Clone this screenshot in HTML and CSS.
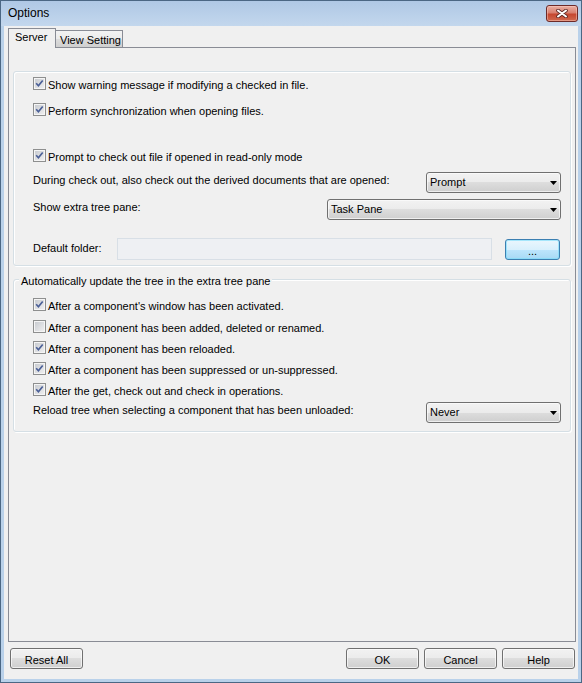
FILE: index.html
```html
<!DOCTYPE html>
<html>
<head>
<meta charset="utf-8">
<link rel="stylesheet" href="styles.css">
</head>
<body>
<div class="window">
  <div class="titlebar">
    <span class="title">Options</span>
    <button class="close" type="button" aria-label="Close">
      <svg width="12" height="9" viewBox="0 0 12 9"><path d="M2 1.5 L10 7.5 M10 1.5 L2 7.5" stroke="#5b2622" stroke-width="3.6" stroke-linecap="round" fill="none"/><path d="M2 1.5 L10 7.5 M10 1.5 L2 7.5" stroke="#ffffff" stroke-width="2" stroke-linecap="round" fill="none"/></svg>
    </button>
  </div>
  <div class="frame">
    <div class="client">
      <div class="tabs">
        <div class="tabstrip">
          <div class="tab active">Server</div>
          <div class="tab inactive">View Setting</div>
        </div>
        <div class="page">
          <div class="group g1">
            <div class="chk"><span class="cb on"><svg viewBox="0 0 9 9"><path d="M1.2 4.3 L3.4 6.7 L7.7 1.5"/></svg></span><span class="lbl">Show warning message if modifying a checked in file.</span></div>
            <div class="chk m13"><span class="cb on"><svg viewBox="0 0 9 9"><path d="M1.2 4.3 L3.4 6.7 L7.7 1.5"/></svg></span><span class="lbl">Perform synchronization when opening files.</span></div>
            <div class="chk m33"><span class="cb on"><svg viewBox="0 0 9 9"><path d="M1.2 4.3 L3.4 6.7 L7.7 1.5"/></svg></span><span class="lbl">Prompt to check out file if opened in read-only mode</span></div>
            <div class="row m10"><span class="lbl">During check out, also check out the derived documents that are opened:</span>
              <div class="combo w135"><span>Prompt</span><svg class="arrow" width="7" height="4" viewBox="0 0 7 4"><polygon points="0,0 7,0 3.5,4"/></svg></div>
            </div>
            <div class="row m6"><span class="lbl">Show extra tree pane:</span>
              <div class="combo w234"><span>Task Pane</span><svg class="arrow" width="7" height="4" viewBox="0 0 7 4"><polygon points="0,0 7,0 3.5,4"/></svg></div>
            </div>
            <div class="row rowf m18"><span class="lbl lbl4">Default folder:</span>
              <div class="textbox"></div>
              <button class="btn dots" type="button">...</button>
            </div>
          </div>
          <div class="group g2">
            <div class="legend">Automatically update the tree in the extra tree pane</div>
            <div class="chk m10"><span class="cb on"><svg viewBox="0 0 9 9"><path d="M1.2 4.3 L3.4 6.7 L7.7 1.5"/></svg></span><span class="lbl">After a component's window has been activated.</span></div>
            <div class="chk m9"><span class="cb"></span><span class="lbl">After a component has been added, deleted or renamed.</span></div>
            <div class="chk m8"><span class="cb on"><svg viewBox="0 0 9 9"><path d="M1.2 4.3 L3.4 6.7 L7.7 1.5"/></svg></span><span class="lbl">After a component has been reloaded.</span></div>
            <div class="chk m8"><span class="cb on"><svg viewBox="0 0 9 9"><path d="M1.2 4.3 L3.4 6.7 L7.7 1.5"/></svg></span><span class="lbl">After a component has been suppressed or un-suppressed.</span></div>
            <div class="chk m8"><span class="cb on"><svg viewBox="0 0 9 9"><path d="M1.2 4.3 L3.4 6.7 L7.7 1.5"/></svg></span><span class="lbl">After the get, check out and check in operations.</span></div>
            <div class="row m6"><span class="lbl">Reload tree when selecting a component that has been unloaded:</span>
              <div class="combo w135"><span>Never</span><svg class="arrow" width="7" height="4" viewBox="0 0 7 4"><polygon points="0,0 7,0 3.5,4"/></svg></div>
            </div>
          </div>
        </div>
      </div>
      <div class="footer">
        <button class="btn" type="button">Reset All</button>
        <button class="btn push" type="button">OK</button>
        <button class="btn" type="button">Cancel</button>
        <button class="btn" type="button">Help</button>
      </div>
    </div>
  </div>
</div>
</body>
</html>
```
FILE: styles.css
```css
* { box-sizing: border-box; }
html, body { margin: 0; padding: 0; }
body {
  width: 582px;
  height: 683px;
  overflow: hidden;
  font: 11px/13px "Liberation Sans", Arial, sans-serif;
  color: #000;
  background: #fff;
}
.window {
  width: 582px;
  height: 683px;
  display: flex;
  flex-direction: column;
  border: 1px solid #4b6784;
  background: #b9d1ea;
}
.titlebar {
  height: 25px;
  flex: none;
  display: flex;
  align-items: flex-start;
  padding: 0 3px 0 7px;
  background: linear-gradient(#afc8e5, #c3d7ed);
}
.title {
  font-size: 12px;
  line-height: 15px;
  margin-top: 5px;
}
.close {
  margin-left: auto;
  margin-top: 4px;
  width: 32px;
  height: 17px;
  padding: 0;
  border: 1px solid #6d2a28;
  border-radius: 3px;
  background: linear-gradient(#eab0a3, #d9806f 45%, #c6472f 55%, #d06a4f);
  box-shadow: inset 0 0 0 1px rgba(255, 210, 200, 0.45);
  display: flex;
  align-items: center;
  justify-content: center;
}
.frame {
  flex: 1;
  display: flex;
  padding: 0 3px 3px;
}
.client {
  flex: 1;
  display: flex;
  flex-direction: column;
  background: #f0f0f0;
  padding: 2px 0 0 4px;
}
.tabs {
  width: 568px;
  display: flex;
  flex-direction: column;
}
.tabstrip {
  height: 19px;
  display: flex;
  align-items: flex-start;
}
.tab {
  border: 1px solid #898c95;
  border-bottom: none;
  white-space: nowrap;
}
.tab.active {
  width: 48px;
  height: 20px;
  padding: 2px 0 0 6px;
  background: #f0f0f0;
  position: relative;
  z-index: 1;
}
.tab.inactive {
  width: 67px;
  height: 17px;
  margin-top: 2px;
  border-left: none;
  padding: 3px 0 0 4px;
  background: linear-gradient(#f3f3f3, #ebebeb 50%, #dddddd 50%, #cfcfcf);
}
.page {
  height: 595px;
  border: 1px solid #898c95;
  padding: 23px 4px 0;
  background: #f0f0f0;
}
.group {
  border: 1px solid #d5dfe5;
  border-radius: 3px;
  box-shadow: inset 1px 1px 0 #fff, 1px 1px 0 #fff;
  display: flex;
  flex-direction: column;
  padding: 0 9px 0 19px;
}
.g1 { height: 195px; padding-top: 5px; }
.g2 { height: 153px; margin-top: 13px; }
.legend {
  align-self: flex-start;
  margin: -5px 0 0 -14px;
  padding: 0 1px 0 2px;
  background: #f0f0f0;
  line-height: 13px;
}
.chk {
  display: flex;
  align-items: flex-start;
  height: 13px;
  white-space: nowrap;
}
.chk .lbl { margin: 2px 0 0 2px; }
.cb {
  width: 13px;
  height: 13px;
  flex: none;
  border: 1px solid #8e8f8f;
  padding: 1px;
  background: linear-gradient(135deg, #c9ccd1, #eeeeef) content-box, #f5f5f5;
  display: flex;
}
.cb svg { width: 9px; height: 9px; }
.cb path { fill: none; stroke: #4a5f97; stroke-width: 1.7; }
.row {
  display: flex;
  align-items: flex-start;
  height: 21px;
  white-space: nowrap;
}
.row .lbl { margin-top: 2px; }
.row .lbl4 { margin-top: 4px; }
.rowf { height: 22px; }
.m6 { margin-top: 6px; }
.m8 { margin-top: 8px; }
.m9 { margin-top: 9px; }
.m10 { margin-top: 10px; }
.m13 { margin-top: 13px; }
.m18 { margin-top: 18px; }
.m33 { margin-top: 33px; }
.combo {
  margin-left: auto;
  height: 21px;
  display: flex;
  align-items: flex-start;
  padding: 3px 3px 0 3px;
  border: 1px solid #707070;
  border-radius: 3px;
  background: linear-gradient(#f2f2f2, #ebebeb 50%, #dddddd 50%, #cfcfcf);
  box-shadow: inset 0 0 0 1px rgba(252, 252, 252, 0.7);
}
.w135 { width: 135px; }
.w234 { width: 234px; }
.arrow { margin: 5px 0 0 auto; }
.arrow polygon { fill: #000; }
.textbox {
  margin-left: auto;
  width: 375px;
  height: 22px;
  border: 1px solid #d8dfe6;
  background: #eef0f3;
}
.btn {
  width: 73px;
  height: 21px;
  padding: 3px 0 0;
  font: inherit;
  color: #000;
  text-align: center;
  border: 1px solid #707070;
  border-radius: 3px;
  background: linear-gradient(#f2f2f2, #ebebeb 50%, #dddddd 50%, #cfcfcf);
  box-shadow: inset 0 0 0 1px rgba(252, 252, 252, 0.7);
  -webkit-appearance: none;
  appearance: none;
}
.btn.dots {
  width: 55px;
  margin: 1px 1px 0 13px;
  border-color: #3c7fb1;
  background: linear-gradient(#eaf6fd, #d9f0fc 50%, #bee6fd 50%, #a7d9f5);
  box-shadow: inset 0 0 0 1px rgba(120, 220, 250, 0.6);
}
.footer {
  display: flex;
  gap: 5px;
  margin-top: 6px;
  padding: 0 3px 0 2px;
}
.push { margin-left: auto; }
```
